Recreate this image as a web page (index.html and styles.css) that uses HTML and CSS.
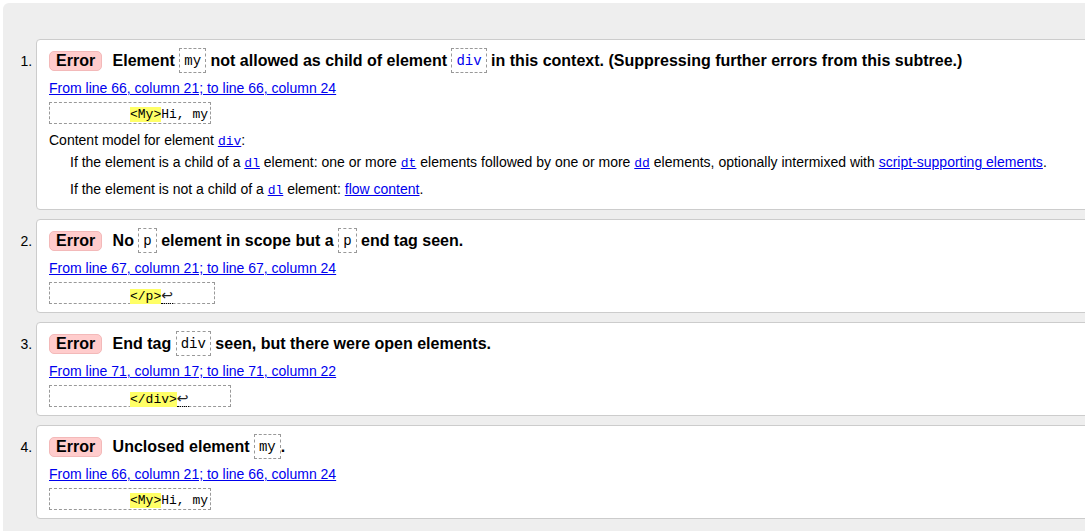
FILE: index.html
```html
<!DOCTYPE html>
<html lang="en">
<head>
<meta charset="utf-8">
<title>Validation results</title>
<link rel="stylesheet" href="styles.css">
</head>
<body>
<div class="page">
<ol class="results">
<li class="msg">
<p class="head"><strong class="badge">Error</strong> Element <code>my</code> not allowed as child of element <a href="#"><code>div</code></a> in this context. (Suppressing further errors from this subtree.)</p>
<p class="loc"><a href="#">From line 66, column 21; to line 66, column 24</a></p>
<p class="extract"><code>          <b>&lt;My&gt;</b>Hi, my</code></p>
<dl class="model">
<dt>Content model for element <a href="#"><code>div</code></a>:</dt>
<dd>If the element is a child of a <a href="#"><code>dl</code></a> element: one or more <a href="#"><code>dt</code></a> elements followed by one or more <a href="#"><code>dd</code></a> elements, optionally intermixed with <a href="#">script-supporting elements</a>.</dd>
<dd>If the element is not a child of a <a href="#"><code>dl</code></a> element: <a href="#">flow content</a>.</dd>
</dl>
</li>
<li class="msg">
<p class="head"><strong class="badge">Error</strong> No <code>p</code> element in scope but a <code>p</code> end tag seen.</p>
<p class="loc"><a href="#">From line 67, column 21; to line 67, column 24</a></p>
<p class="extract"><code>          <b>&lt;/p&gt;</b><span class="lf" title="Line break">↩</span>     </code></p>
</li>
<li class="msg">
<p class="head"><strong class="badge">Error</strong> End tag <code>div</code> seen, but there were open elements.</p>
<p class="loc"><a href="#">From line 71, column 17; to line 71, column 22</a></p>
<p class="extract"><code>          <b>&lt;/div&gt;</b><span class="lf" title="Line break">↩</span>     </code></p>
</li>
<li class="msg">
<p class="head"><strong class="badge">Error</strong> Unclosed element <code>my</code>.</p>
<p class="loc"><a href="#">From line 66, column 21; to line 66, column 24</a></p>
<p class="extract"><code>          <b>&lt;My&gt;</b>Hi, my</code></p>
</li>
</ol>
</div>
</body>
</html>
```

FILE: styles.css
```css
html, body {
  margin: 0;
  padding: 0;
}

body {
  background: #fff;
  color: #000;
  font-family: "Liberation Sans", Arial, sans-serif;
  font-size: 14px;
  overflow: hidden;
}

.page {
  margin: 3px 0 0 3px;
  width: 1150px;
  height: 528px;
  padding-top: 36px;
  box-sizing: border-box;
  background: #eee;
  border-top-left-radius: 6px;
}

.results {
  margin: 0;
  padding: 0 0 0 33px;
  list-style: decimal outside;
}

.msg {
  background: #fff;
  border: 1px solid #ccc;
  border-radius: 4px;
  padding: 8px 12px 8px;
  margin-bottom: 9px;
  line-height: 17px;
}

a {
  color: #00e;
  text-decoration: underline;
}

code {
  font-family: "Liberation Mono", "DejaVu Sans Mono", monospace;
  font-size: 13px;
  line-height: 1;
}

.head {
  margin: 0;
  height: 25px;
  font-weight: bold;
  font-size: 16px;
  line-height: 25px;
  white-space: nowrap;
}

.badge {
  display: inline-block;
  padding: 0 6px;
  margin-right: 6px;
  line-height: 18px;
  background: #fcc;
  border: 1px solid #f3b9b9;
  border-radius: 5px;
}

.head code {
  display: inline-block;
  vertical-align: top;
  padding: 2px 4px 0;
  border: 1px dashed #999;
  font-weight: normal;
  font-size: 14px;
  line-height: 21px;
}

.loc {
  margin: 7px 0 0;
  height: 17px;
}

.extract {
  margin: 5px 0 0;
  width: fit-content;
  height: 14px;
  padding: 5px 2px 1px;
  border: 1px dashed #999;
  white-space: pre;
  font-family: "Liberation Mono", "DejaVu Sans Mono", monospace;
  font-size: 13px;
  line-height: 14px;
}

.extract code {
  font-size: 13px;
  line-height: 14px;
}

.extract b {
  font-weight: normal;
  background: #ff6;
}

.lf {
  font-family: "DejaVu Sans", sans-serif;
  font-size: 14px;
  color: #222;
  border-bottom: 1px dotted #000;
}

.model {
  margin: 8px 0 3px;
}

.model dt {
  margin: 0;
  height: 17px;
}

.model dd {
  margin: 5px 0 0 21px;
  height: 17px;
}

.model dd + dd {
  margin-top: 10px;
}
```
